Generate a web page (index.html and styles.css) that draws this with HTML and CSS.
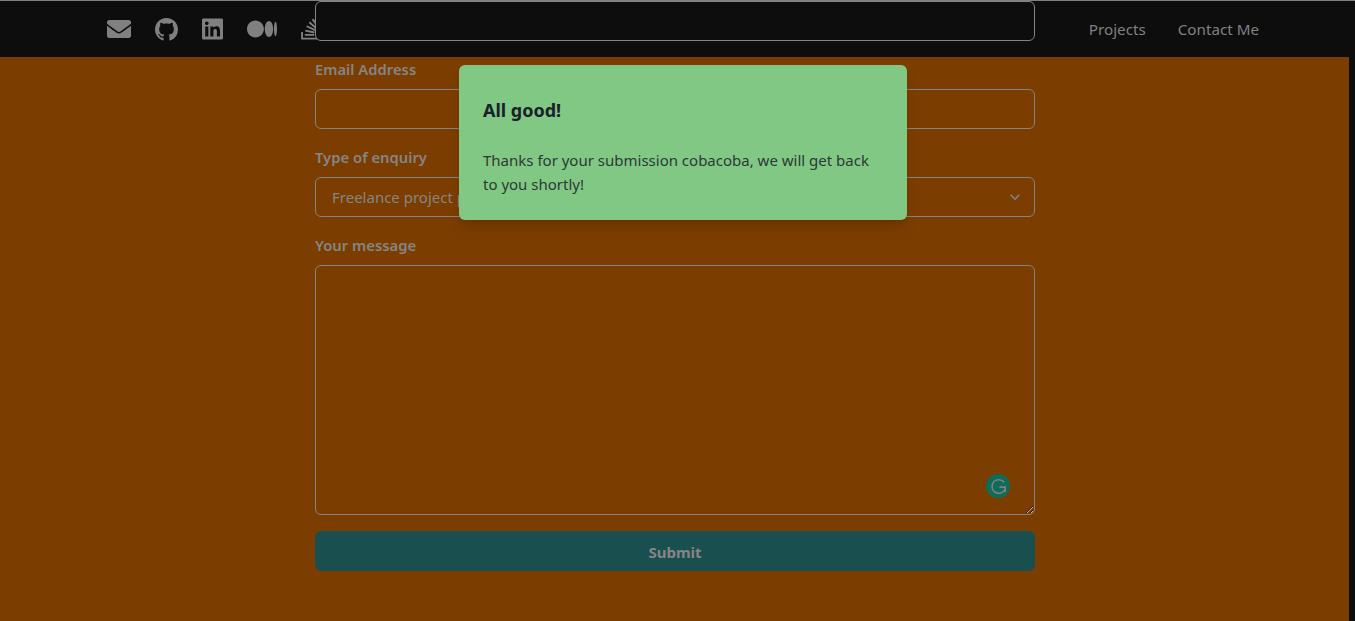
FILE: index.html
```html
<!DOCTYPE html>
<html lang="en">
<head>
<meta charset="utf-8">
<title>Contact</title>
<link rel="stylesheet" href="styles.css">
</head>
<body>
<div class="app">
  <div class="page">
    <nav class="nav">
      <div class="socials">
        <svg class="ic ic-mail" viewBox="0 0 512 512"><path d="M502.3 190.8c3.9-3.1 9.7-.2 9.7 4.7V400c0 26.5-21.5 48-48 48H48c-26.5 0-48-21.5-48-48V195.6c0-5 5.7-7.8 9.7-4.7 22.4 17.4 52.1 39.5 154.1 113.6 21.1 15.4 56.7 47.8 92.2 47.6 35.7.3 72-32.8 92.3-47.6 102-74.1 131.6-96.3 154-113.7zM256 320c23.2.4 56.6-29.2 73.4-41.4 132.7-96.3 142.8-104.7 173.4-128.7 5.8-4.5 9.2-11.5 9.2-18.9v-19c0-26.5-21.5-48-48-48H48C21.5 64 0 85.5 0 112v19c0 7.4 3.4 14.3 9.2 18.9 30.6 23.9 40.7 32.4 173.4 128.7 16.8 12.2 50.2 41.8 73.4 41.4z"/></svg>
        <svg class="ic ic-gh" viewBox="0 0 16 16"><path d="M8 0C3.58 0 0 3.58 0 8c0 3.54 2.29 6.53 5.47 7.59.4.07.55-.17.55-.38 0-.19-.01-.82-.01-1.49-2.01.37-2.53-.49-2.69-.94-.09-.23-.48-.94-.82-1.13-.28-.15-.68-.52-.01-.53.63-.01 1.08.58 1.23.82.72 1.21 1.87.87 2.33.66.07-.52.28-.87.51-1.07-1.78-.2-3.64-.89-3.64-3.95 0-.87.31-1.59.82-2.15-.08-.2-.36-1.02.08-2.12 0 0 .67-.21 2.2.82.64-.18 1.32-.27 2-.27.68 0 1.36.09 2 .27 1.53-1.04 2.2-.82 2.2-.82.44 1.1.16 1.92.08 2.12.51.56.82 1.27.82 2.15 0 3.07-1.87 3.75-3.65 3.95.29.25.54.73.54 1.48 0 1.07-.01 1.93-.01 2.2 0 .21.15.46.55.38A8.013 8.013 0 0016 8c0-4.42-3.58-8-8-8z"/></svg>
        <svg class="ic ic-in" viewBox="0 0 448 512"><path d="M416 32H31.9C14.3 32 0 46.5 0 64.3v383.4C0 465.5 14.3 480 31.9 480H416c17.6 0 32-14.5 32-32.3V64.3c0-17.8-14.4-32.3-32-32.3zM135.4 416H69V202.2h66.5V416zm-33.2-243c-21.3 0-38.5-17.3-38.5-38.5S80.9 96 102.2 96c21.2 0 38.5 17.3 38.5 38.5 0 21.3-17.2 38.5-38.5 38.5zm282.1 243h-66.4V312c0-24.8-.5-56.7-34.5-56.7-34.6 0-39.9 27-39.9 54.9V416h-66.4V202.2h63.7v29.2h.9c8.9-16.8 30.6-34.5 62.9-34.5 67.2 0 79.7 44.3 79.7 101.9V416z"/></svg>
        <svg class="ic ic-med" viewBox="0 0 640 512"><path d="M180.5,74.262C80.813,74.262,0,155.633,0,256S80.819,437.738,180.5,437.738,361,356.373,361,256,280.191,74.262,180.5,74.262Zm288.25,10.646c-49.845,0-90.245,76.619-90.245,171.095s40.406,171.1,90.251,171.1,90.251-76.619,90.251-171.1H559C559,161.5,518.6,84.908,468.752,84.908Zm139.506,17.821c-17.526,0-31.735,68.628-31.735,153.274s14.2,153.274,31.735,153.274S640,340.631,640,256C640,171.351,625.785,102.729,608.258,102.729Z"/></svg>
        <svg class="ic ic-so" viewBox="0 0 384 512"><path d="M290.7 311L95 269.7 86.8 309l195.7 41zm51-87L188.2 95.7l-25.5 30.8 153.5 128.3zm-31.2 39.7L129.2 179l-16.7 36.5L293.7 300zM262 32l-32 24 119.3 160.4 32-24zm20.5 328h-200v39.7h200zm39.7 80H42.7V320h-40v160h359.5V320h-40z"/></svg>
      </div>
      <div class="links">
        <a class="link">Projects</a>
        <a class="link">Contact Me</a>
      </div>
    </nav>
    <main class="main">
      <form class="form">
        <input class="field field-top" type="text" aria-label="Name">
        <div class="group">
          <label class="label">Email Address</label>
          <input class="field" type="email">
        </div>
        <div class="group">
          <label class="label">Type of enquiry</label>
          <div class="select-wrap">
            <select class="field select"><option>Freelance project proposal</option></select>
            <svg class="chevron" viewBox="0 0 24 24"><path d="M16.59 8.59L12 13.17 7.41 8.59 6 10l6 6 6-6z"/></svg>
          </div>
        </div>
        <div class="group">
          <label class="label">Your message</label>
          <div class="area-wrap">
            <textarea class="field area"></textarea>
            <span class="grammarly"><svg viewBox="0 0 24 24"><path d="M18 7.6A7.3 7.3 0 0 0 12.4 5a7 7 0 1 0 6.4 9.6M13 12.6h6v5.2" fill="none"/></svg></span>
          </div>
        </div>
        <button class="submit" type="button">Submit</button>
      </form>
    </main>
  </div>
  <div class="scrollbar"></div>
</div>
<div class="alert">
  <h2 class="alert-title">All good!</h2>
  <p class="alert-text">Thanks for your submission cobacoba, we will get back to you shortly!</p>
</div>
</body>
</html>
```
FILE: styles.css
```css
* { box-sizing: border-box; }
html, body { margin: 0; height: 100%; overflow: hidden; }
body { font-family: "Noto Sans", "Open Sans", sans-serif; font-size: 16px; line-height: 24px; color: #808080; background: #0d0d0e; }
.app { display: flex; height: 621px; border-top: 1px solid #7f7f7f; }
.page { flex: 1; min-width: 0; display: flex; flex-direction: column; background: #7c3d00; }
.scrollbar { width: 6px; background: #0d0d0e; }
.nav { height: 56px; flex: none; background: #0d0d0e; display: flex; align-items: center; justify-content: space-between; padding: 0 90px 0 107px; }
.socials { display: flex; align-items: center; gap: 24px; }
.ic { display: block; height: 24px; fill: #808080; flex: none; }
.ic-mail { width: 24px; }
.ic-gh { width: 23px; height: 23px; }
.ic-in { width: 21px; }
.ic-med { width: 30px; }
.ic-so { width: 18px; }
.links { display: flex; gap: 32px; }
.link { color: #808080; font-size: 15.2px; }
.main { flex: 1; padding-left: 315px; margin-top: -56px; position: relative; }
.form { width: 720px; display: flex; flex-direction: column; gap: 16px; }
.group { display: flex; flex-direction: column; gap: 8px; }
.label { font-weight: 600; font-size: 14.8px; color: #858585; height: 24px; }
.field { display: block; width: 100%; height: 40px; border: 1px solid #828488; border-radius: 6px; background: transparent; color: #858585; font: inherit; font-size: 15px; padding: 0 16px; outline: none; }
.field-top { background: #0d0d0e; }
.select-wrap, .area-wrap { position: relative; }
.select { appearance: none; -webkit-appearance: none; }
.chevron { position: absolute; right: 10px; top: 10px; width: 20px; height: 20px; fill: #808080; }
.area { height: 250px; padding: 8px 16px; resize: vertical; }
.grammarly { position: absolute; left: 671px; top: 209px; width: 24px; height: 24px; border-radius: 50%; background: #0f6b5a; display: flex; align-items: center; justify-content: center; }
.grammarly svg { width: 23px; height: 23px; stroke: #808080; stroke-width: 1.7; }
.submit { height: 40px; border: 0; border-radius: 6px; background: #1a4f4f; color: #858585; font: inherit; font-size: 15px; font-weight: 700; padding: 1px 0 0; }
.alert { position: absolute; left: 459px; top: 65px; width: 448px; height: 155px; background: #80c883; border-radius: 6px; padding: 33px 24px 0; box-shadow: 0 10px 15px -3px rgba(0,0,0,.12), 0 4px 6px -2px rgba(0,0,0,.08); }
.alert-title { margin: 0 0 26px; font-size: 18px; line-height: 24px; font-weight: 700; color: #1a202c; }
.alert-text { margin: 0; font-size: 15px; line-height: 24px; color: #2c3a36; }
```
